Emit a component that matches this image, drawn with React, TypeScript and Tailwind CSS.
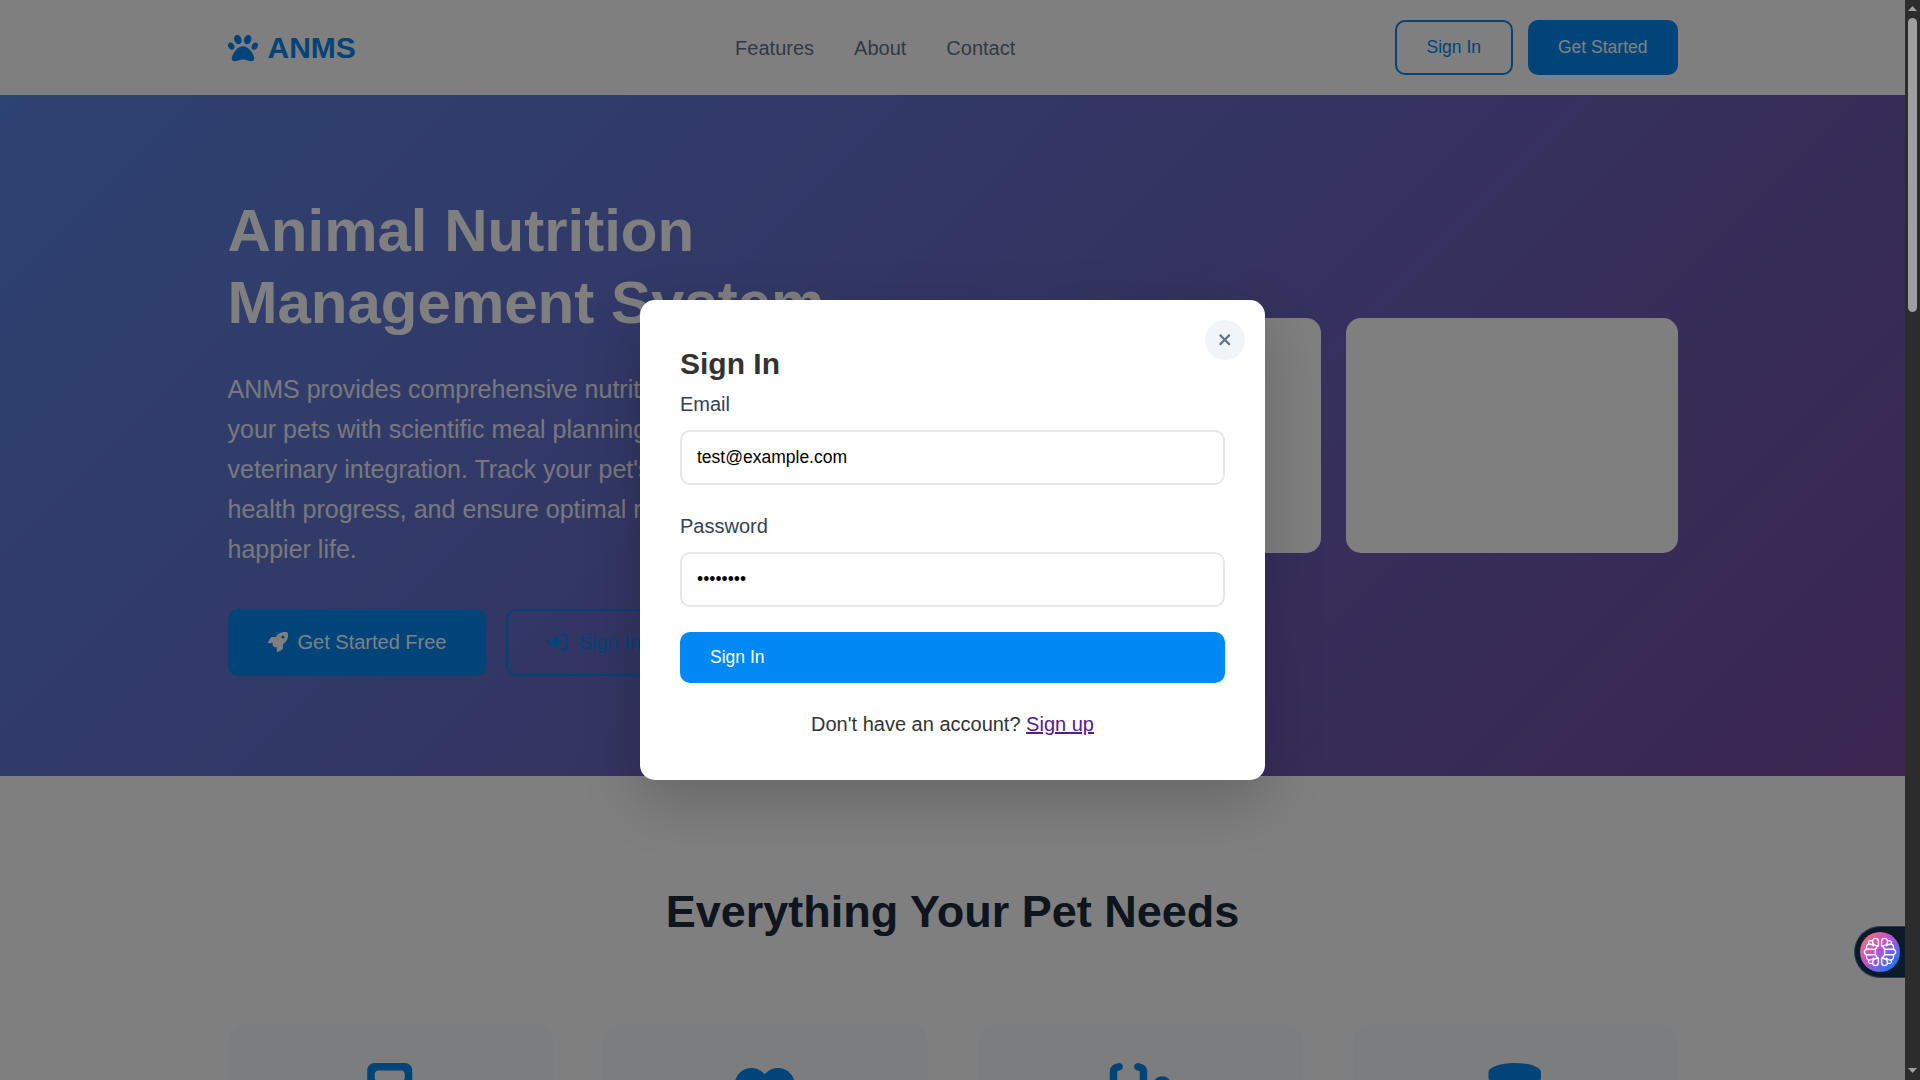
import { FaPaw, FaRocket, FaCalculator, FaHeartPulse, FaStethoscope, FaDatabase, FaRightToBracket, FaXmark } from "react-icons/fa6";

const cards = [FaCalculator, FaHeartPulse, FaStethoscope, FaDatabase];

function Header() {
  return (
    <header className="h-[95px] bg-white">
      <div className="mx-auto flex h-full w-[1450px] items-center justify-between">
        <div className="flex items-center gap-[10px] text-[30px] font-bold text-[#0088f5]">
          <FaPaw />
          <span>ANMS</span>
        </div>
        <nav className="flex gap-10 text-[20px] text-[#5f748b]">
          <a>Features</a>
          <a>About</a>
          <a>Contact</a>
        </nav>
        <div className="flex gap-[15px] text-[17.5px]">
          <button className="h-[55px] rounded-[10px] border-2 border-[#0088f5] px-[30px] pb-[2px] leading-5 text-[#0088f5]">Sign In</button>
          <button className="h-[55px] rounded-[10px] bg-[#0088f5] px-[30px] pb-[2px] leading-5 text-white">Get Started</button>
        </div>
      </div>
    </header>
  );
}

function Hero() {
  return (
    <section className="h-[681px] bg-[linear-gradient(135deg,#5b86e5_0%,#764ba2_100%)] text-white">
      <div className="mx-auto grid h-full w-[1450px] grid-cols-2 items-center gap-[72px]">
        <div>
          <h1 className="text-[60px] font-bold leading-[72px]">Animal Nutrition Management System</h1>
          <p className="mt-[30px] text-[25px] leading-[40px] whitespace-nowrap opacity-90">
            ANMS provides comprehensive nutrition management for<br />
            your pets with scientific meal planning and secure<br />
            veterinary integration. Track your pet's daily meals,<br />
            health progress, and ensure optimal nutrition for a<br />
            happier life.
          </p>
          <div className="mt-10 flex gap-5 text-[20px]">
            <button className="flex h-[67px] items-center gap-[10px] rounded-[10px] bg-[#0088f5] px-10 pb-[2px]">
              <FaRocket />
              Get Started Free
            </button>
            <button className="flex h-[67px] items-center gap-[10px] rounded-[10px] border-2 border-[#0088f5] px-10 pb-[2px] text-[#0088f5]">
              <FaRightToBracket />
              Sign In
            </button>
          </div>
        </div>
        <div className="grid grid-cols-2 gap-[25px]">
          <div className="h-[235px] rounded-[15px] bg-white" />
          <div className="h-[235px] rounded-[15px] bg-white" />
        </div>
      </div>
    </section>
  );
}

function Features() {
  return (
    <section className="bg-white pt-[100px]">
      <h2 className="text-center text-[45px] font-bold leading-[72px] text-[#1a2b3c]">Everything Your Pet Needs</h2>
      <div className="mx-auto mt-[75px] grid w-[1450px] grid-cols-4 gap-[50px]">
        {cards.map((Icon, i) => (
          <div key={i} className="flex h-[400px] justify-center rounded-[20px] bg-[#f8fafc] pt-[39.5px] text-[60px] text-[#0088f5]">
            <Icon className="h-[60px] w-[67.5px]" />
          </div>
        ))}
      </div>
    </section>
  );
}

function Modal() {
  return (
    <div className="relative h-[480px] w-[625px] rounded-[15px] bg-white px-10 pt-10 text-[20px] text-[#333] shadow-[0_20px_60px_rgba(0,0,0,0.2)]">
      <button className="absolute right-5 top-5 flex size-10 items-center justify-center rounded-full bg-[#f0f5f9] text-[17.5px] text-[#5f748b]">
        <FaXmark />
      </button>
      <h2 className="text-[30px] font-bold leading-[48px]">Sign In</h2>
      <label className="block leading-8 text-[#334155]">Email</label>
      <div className="mt-[10px] flex h-[55px] items-center rounded-[10px] border-2 border-[#e5e7eb] px-[15px] text-[17.5px] text-black">test@example.com</div>
      <label className="mt-[25px] block leading-8 text-[#334155]">Password</label>
      <div className="mt-[10px] flex h-[55px] items-center rounded-[10px] border-2 border-[#e5e7eb] px-[15px] text-[17.5px] text-black">••••••••</div>
      <button className="mt-[25px] flex h-[51px] w-full items-center rounded-[10px] bg-[#0088f5] px-[30px] text-[17.5px] text-white">Sign In</button>
      <p className="mt-[25px] text-center leading-8">
        Don't have an account? <a className="text-[#551a8b] underline">Sign up</a>
      </p>
    </div>
  );
}

function Scrollbar() {
  return (
    <div className="flex h-full w-[15px] flex-col items-center bg-[#2c2c2c] text-[#9f9f9f]">
      <div className="mt-[6px] h-[5px] w-[9px] bg-current [clip-path:polygon(50%_0,100%_100%,0_100%)]" />
      <div className="mt-[7px] h-[294px] w-[9px] rounded-full bg-current" />
      <div className="mt-auto mb-[7px] h-[5px] w-[9px] bg-current [clip-path:polygon(0_0,100%_0,50%_100%)]" />
    </div>
  );
}

const quadrants = ["", "matrix(-1 0 0 1 40 0)", "matrix(1 0 0 -1 0 40)", "matrix(-1 0 0 -1 40 40)"];

function Assistant() {
  return (
    <div className="absolute right-0 top-[926px] flex h-[52px] w-[51px] items-center rounded-l-full border border-r-0 border-[#2b3f52] bg-[#0b1a28] pl-[5px]">
      <div className="size-10 rounded-full bg-[linear-gradient(135deg,#ff7a5c_0%,#c04fd6_45%,#0a7cff_90%)]">
        <svg viewBox="0 0 40 40" className="size-10" fill="none" stroke="white" strokeWidth="1.4" strokeLinecap="round" strokeLinejoin="round">
          {quadrants.map((t) => (
            <path
              key={t}
              transform={t || undefined}
              d="M4.400 20a2.700 2.700 0 0 1 2.700-2.700H15.400V20M15.400 17.300 17.600 14M7 17.300C5.600 15 6.800 12 9.600 12c1.600 0 2.800.8 3.800 1.800M8.600 12C8 9 10 7.900 12.200 8.800M18.400 14V9.400C18.400 7.500 17 6.400 15.500 6.400s-3 1.300-3 3.100c0 2.400 2.400 4.200 5.900 4.500"
            />
          ))}
        </svg>
      </div>
    </div>
  );
}

export default function App() {
  return (
    <div className="flex h-[1080px] w-[1920px] overflow-hidden font-['Liberation_Sans',Arial,sans-serif]">
      <div className="relative h-full w-[1905px] overflow-hidden bg-white">
        <Header />
        <Hero />
        <Features />
        <div className="absolute inset-0 flex items-center justify-center bg-black/50">
          <Modal />
        </div>
        <Assistant />
      </div>
      <Scrollbar />
    </div>
  );
}
